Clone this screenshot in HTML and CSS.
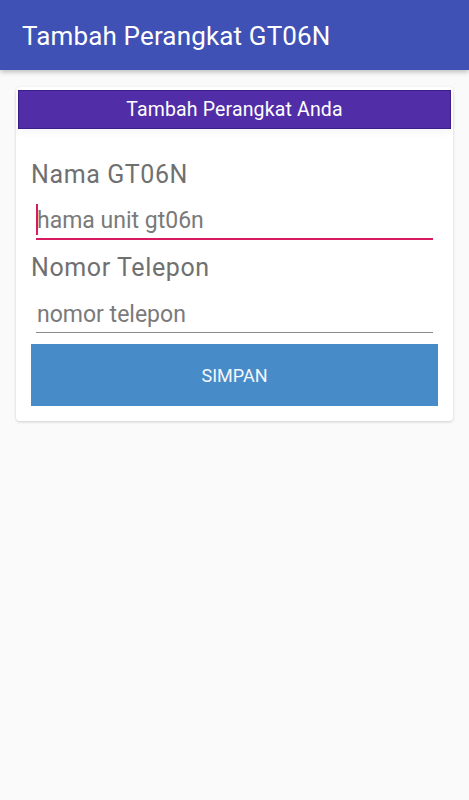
FILE: index.html
```html
<!DOCTYPE html>
<html lang="id">
<head>
    <meta charset="UTF-8">
    <meta name="viewport" content="width=device-width, initial-scale=1.0">
    <title>Tambah Perangkat GT06N</title>
    <link rel="stylesheet" href="styles.css">
</head>
<body>
    <header class="appbar">
        <h1 class="appbar-title">Tambah Perangkat GT06N</h1>
    </header>

    <main class="page">
        <div class="card">
            <div class="card-header">Tambah Perangkat Anda</div>

            <form class="form">
                <label class="label" for="nama">Nama GT06N</label>
                <div class="field focused">
                    <input class="input" id="nama" type="text" placeholder="hama unit gt06n">
                </div>

                <label class="label label-second" for="telepon">Nomor Telepon</label>
                <div class="field">
                    <input class="input" id="telepon" type="tel" placeholder="nomor telepon">
                </div>

                <button class="button" type="button">SIMPAN</button>
            </form>
        </div>
    </main>
</body>
</html>
```

FILE: styles.css
```css
* {
    margin: 0;
    padding: 0;
    box-sizing: border-box;
    font-family: Roboto, 'Noto Sans', sans-serif;
}

body {
    background-color: #fafafa;
    min-height: 100vh;
}

.appbar {
    height: 70px;
    background-color: #3f51b5;
    padding-left: 22px;
    display: flex;
    align-items: center;
    box-shadow: 0 2px 5px rgba(0, 0, 0, 0.25);
    position: relative;
}

.appbar-title {
    font-size: 26px;
    font-weight: 400;
    letter-spacing: 0.15px;
    color: #fff;
    padding-top: 1px;
}

.page {
    padding: 17px 16px;
}

.card {
    background-color: #fff;
    border-radius: 4px;
    padding: 3px 2px 15px;
    box-shadow: 0 1px 3px rgba(0, 0, 0, 0.18);
}

.card-header {
    height: 39px;
    background-color: #512da8;
    border: 1px solid #3b1e8a;
    color: #fff;
    font-size: 19.5px;
    letter-spacing: 0.15px;
    display: flex;
    align-items: center;
    justify-content: center;
    box-shadow: 0 4px 8px rgba(0, 0, 0, 0.04);
}

.form {
    padding: 0 13px;
}

.label {
    display: block;
    font-size: 25px;
    letter-spacing: 0.6px;
    line-height: 32px;
    color: #707070;
    margin-top: 30px;
}

.label-second {
    margin-top: 12px;
}

.field {
    position: relative;
    margin: 4px 5px 0;
}

.input {
    width: 100%;
    height: 45px;
    border: none;
    border-bottom: 1px solid #8a8a8a;
    background: none;
    outline: none;
    padding: 9px 0 0 1px;
    font-size: 23px;
    color: #333;
}

.input::placeholder {
    color: #7a7a7a;
}

.focused .input {
    border-bottom: 2px solid #d81b60;
    padding-top: 8px;
}

/* kursor teks */
.focused::before {
    content: '';
    position: absolute;
    left: 0;
    top: 9px;
    width: 2px;
    height: 31px;
    background-color: #d81b60;
}

.button {
    display: block;
    width: 100%;
    height: 62px;
    margin-top: 11px;
    border: none;
    background-color: #478cc8;
    color: #f4f7fb;
    font-size: 18px;
    cursor: pointer;
}
```
